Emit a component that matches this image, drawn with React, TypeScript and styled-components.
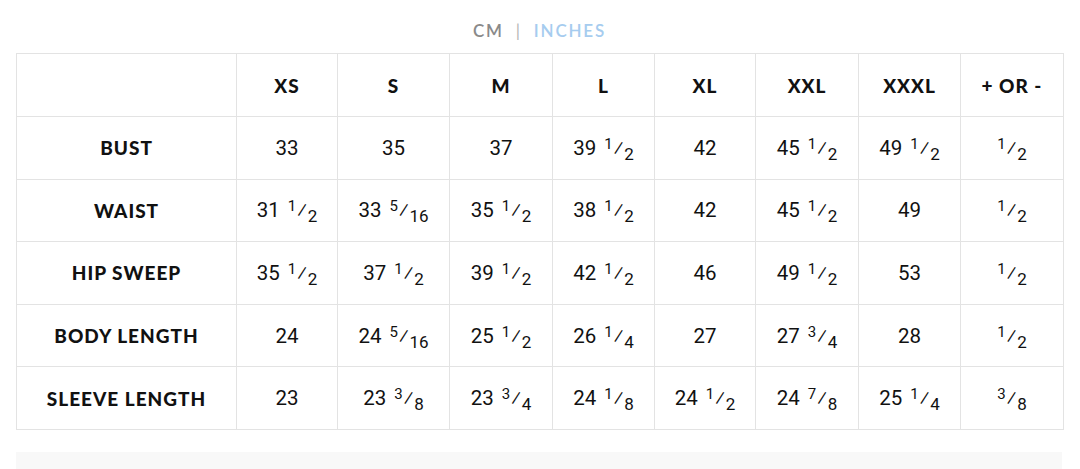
import React from "react";
import styled, { createGlobalStyle } from "styled-components";

const Global = createGlobalStyle`
  html, body { margin: 0; padding: 0; background: #fff; }
  body { font-family: Roboto, "Liberation Sans", sans-serif; }
`;

const Page = styled.div`
  width: 1080px;
  padding: 0 17px 0 16px;
  box-sizing: border-box;
`;

const UnitBar = styled.div`
  height: 53px;
  display: flex;
  justify-content: center;
  align-items: center;
  gap: 12px;
  padding-top: 7px;
  box-sizing: border-box;
  font-family: Lato, "Open Sans", sans-serif;
  font-size: 17px;
  letter-spacing: 1.8px;
  font-weight: 600;
`;

const Unit = styled.span<{ $active?: boolean }>`
  color: ${(p) => (p.$active ? "#a6ccef" : "#8a8a8a")};
`;

const Sep = styled.span`
  color: #b5b5b5;
  font-weight: 400;
`;

const Table = styled.table`
  border-collapse: collapse;
  width: 1047px;
  table-layout: fixed;
`;

const Row = styled.tr<{ $top?: boolean }>`
  height: ${(p) => (p.$top ? "63px" : "62.6px")};
`;

const Cell = styled.td<{ $head?: boolean }>`
  border: 1px solid #e3e3e3;
  padding: 0;
  text-align: center;
  vertical-align: middle;
  color: #111;
  font-family: ${(p) => (p.$head ? `Lato, "Open Sans", sans-serif` : `Roboto, "Liberation Sans", sans-serif`)};
  font-weight: ${(p) => (p.$head ? 900 : 400)};
  font-size: ${(p) => (p.$head ? "19px" : "20.5px")};
  letter-spacing: ${(p) => (p.$head ? "1px" : "0")};
`;

const Num = styled.sup`
  font-size: 15px;
  vertical-align: 6px;
  line-height: 0;
`;

const Gap = styled.span`
  display: inline-block;
  width: 3px;
`;

const Den = styled.sub`
  font-size: 17px;
  vertical-align: -5px;
  line-height: 0;
`;

const Slash = styled.span`
  font-size: 21px;
  margin: 0 1px;
`;

const Strip = styled.div`
  margin-top: 22px;
  height: 20px;
  width: 1046px;
  background: #f8f8f8;
`;

const sizes = ["XS", "S", "M", "L", "XL", "XXL", "XXXL", "+ OR -"];
const widths = [220, 101, 112, 103, 102, 101, 103, 102, 103];

const rows: [string, string[]][] = [
  ["BUST", ["33", "35", "37", "39 1/2", "42", "45 1/2", "49 1/2", "1/2"]],
  ["WAIST", ["31 1/2", "33 5/16", "35 1/2", "38 1/2", "42", "45 1/2", "49", "1/2"]],
  ["HIP SWEEP", ["35 1/2", "37 1/2", "39 1/2", "42 1/2", "46", "49 1/2", "53", "1/2"]],
  ["BODY LENGTH", ["24", "24 5/16", "25 1/2", "26 1/4", "27", "27 3/4", "28", "1/2"]],
  ["SLEEVE LENGTH", ["23", "23 3/8", "23 3/4", "24 1/8", "24 1/2", "24 7/8", "25 1/4", "3/8"]],
];

function Value({ v }: { v: string }) {
  const parts = v.split(" ");
  let whole = "";
  let frac = "";
  if (parts.length === 2) {
    whole = parts[0];
    frac = parts[1];
  } else if (v.includes("/")) {
    frac = v;
  } else {
    whole = v;
  }
  if (!frac) return <>{whole}</>;
  const [n, d] = frac.split("/");
  return (
    <>
      {whole ? (
        <>
          {whole} <Gap />
        </>
      ) : null}
      <Num>{n}</Num>
      <Slash>⁄</Slash>
      <Den>{d}</Den>
    </>
  );
}

export default function App() {
  return (
    <>
      <Global />
      <Page>
        <UnitBar>
          <Unit>CM</Unit>
          <Sep>|</Sep>
          <Unit $active>INCHES</Unit>
        </UnitBar>
        <Table>
          <colgroup>
            {widths.map((w, i) => (
              <col key={i} style={{ width: w }} />
            ))}
          </colgroup>
          <tbody>
            <Row $top>
              <Cell $head />
              {sizes.map((s) => (
                <Cell $head key={s}>
                  {s}
                </Cell>
              ))}
            </Row>
            {rows.map(([label, vals]) => (
              <Row key={label}>
                <Cell $head>{label}</Cell>
                {vals.map((v, i) => (
                  <Cell key={i}>
                    <Value v={v} />
                  </Cell>
                ))}
              </Row>
            ))}
          </tbody>
        </Table>
        <Strip />
      </Page>
    </>
  );
}
